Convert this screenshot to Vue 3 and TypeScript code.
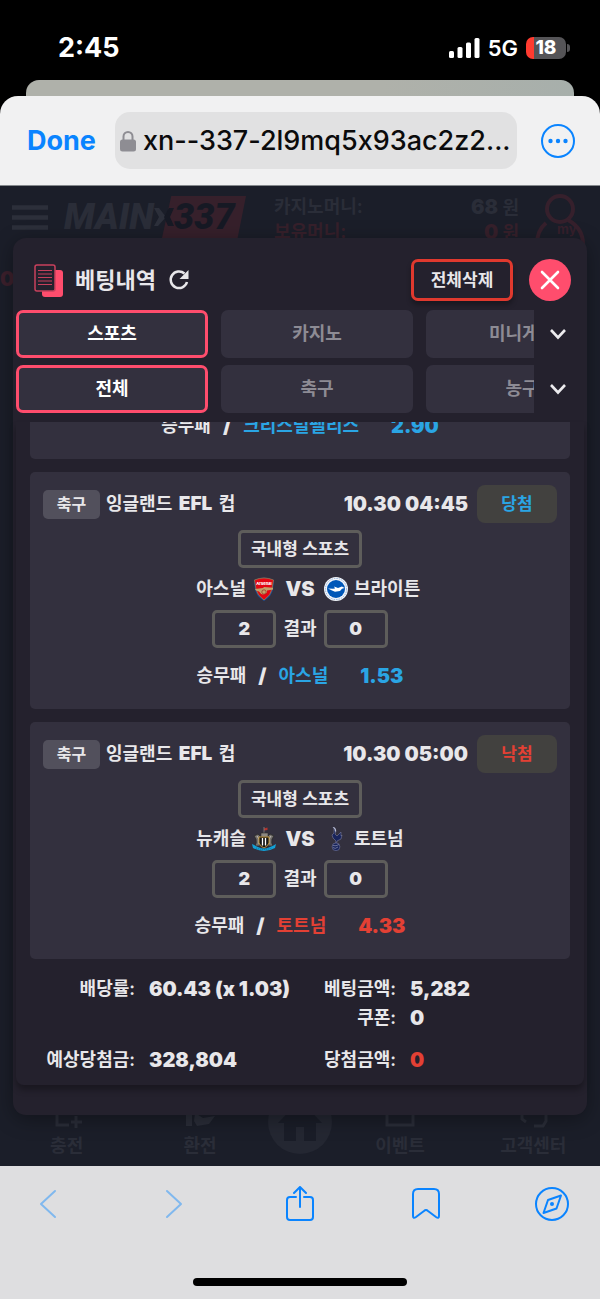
<script setup lang="ts">
import { ref } from 'vue'

type Crest = 'arsenal' | 'brighton' | 'newcastle' | 'tottenham'

interface Bet {
  time: string
  won: boolean
  home: { name: string; crest: Crest; score: number }
  away: { name: string; crest: Crest; score: number }
  pick: string
  odds: string
}

const bets: Bet[] = [
  {
    time: '10.30 04:45',
    won: true,
    home: { name: '아스널', crest: 'arsenal', score: 2 },
    away: { name: '브라이튼', crest: 'brighton', score: 0 },
    pick: '아스널',
    odds: '1.53',
  },
  {
    time: '10.30 05:00',
    won: false,
    home: { name: '뉴캐슬', crest: 'newcastle', score: 2 },
    away: { name: '토트넘', crest: 'tottenham', score: 0 },
    pick: '토트넘',
    odds: '4.33',
  },
]

const filters = [
  { name: 'category', tabs: ['스포츠', '카지노', '미니게임'] },
  { name: 'sport', tabs: ['전체', '축구', '농구'] },
]
const active = ref<number[]>([0, 0])
</script>

<template>
  <div class="screen">
    <header class="status">
      <span class="clock">2:45</span>
      <div class="status-right">
        <svg class="signal" viewBox="0 0 31 20" aria-hidden="true">
          <rect x="0" y="13" width="5" height="7" rx="1.5" />
          <rect x="8.500" y="9" width="5" height="11" rx="1.500" />
          <rect x="17" y="4.500" width="5" height="15.500" rx="1.500" />
          <rect x="25.500" y="0" width="5" height="20" rx="1.500" />
        </svg>
        <span class="network">5G</span>
        <span class="battery"><span>18</span></span>
      </div>
    </header>
    <div class="peek"></div>

    <div class="sheet">
      <div class="addressbar">
        <button type="button" class="done">Done</button>
        <div class="url">
          <svg class="lock" viewBox="0 0 16 22" aria-hidden="true">
            <path d="M3.500 10V6.500a4.500 4.500 0 0 1 9 0V10" fill="none" stroke="#8e8d93" stroke-width="2" />
            <rect x="0" y="9.500" width="16" height="12" rx="2.500" fill="#8e8d93" />
          </svg>
          <span class="host">xn--337-2l9mq5x93ac2z2...</span>
        </div>
        <button type="button" class="round" aria-label="더보기">
          <svg viewBox="0 0 36 36" aria-hidden="true">
            <circle cx="18" cy="18" r="16" fill="none" stroke="#0a84ff" stroke-width="2" />
            <circle cx="10.500" cy="18" r="2.200" fill="#0a84ff" />
            <circle cx="18" cy="18" r="2.200" fill="#0a84ff" />
            <circle cx="25.500" cy="18" r="2.200" fill="#0a84ff" />
          </svg>
        </button>
      </div>

      <main class="web">
        <div class="site">
          <div class="site-head">
            <svg class="menu" viewBox="0 0 36 26" aria-hidden="true">
              <path d="M0 2.500h36M0 12.500h36M0 22.500h36" stroke="#2c2f3a" stroke-width="4.500" />
            </svg>
            <div class="logo">
              <span class="logo-main">MAIN</span>
              <svg class="logo-x" viewBox="0 0 20 18" aria-hidden="true">
                <path d="M0 0h5l7 9-8 9H0l5-9z" fill="#2c2f3a" />
                <path d="M20 0h-5l-5 9 4 9h6l-4-9z" fill="#161924" />
              </svg>
              <span class="logo-num">337</span>
            </div>
            <dl class="wallet">
              <div><dt>카지노머니:</dt><dd><b>68</b> 원</dd></div>
              <div class="held"><dt>보유머니:</dt><dd><b>0</b> 원</dd></div>
            </dl>
            <svg class="me" viewBox="0 0 50 50" aria-hidden="true">
              <g fill="none" stroke="#36202c" stroke-width="4">
                <circle cx="25" cy="15" r="13" />
                <path d="M11 29C5 34 2 40 2 50M33 26c9 5 15 13 15 24" />
              </g>
              <text x="22" y="40">my</text>
            </svg>
          </div>
          <span class="ticker">0</span>
          <nav class="site-nav">
            <a href="#">
              <svg viewBox="0 0 34 34" aria-hidden="true"><path d="M17 4H7v21h12M26 16v12M21 22h11" /></svg>
              <span>충전</span>
            </a>
            <a href="#">
              <svg viewBox="0 0 34 34" aria-hidden="true"><path class="solid" d="M3 8h6v18H3zM12 13l8 5 12-2-6 8-12 2-3-5z" /></svg>
              <span>환전</span>
            </a>
            <a href="#" class="home" aria-label="홈">
              <svg viewBox="0 0 64 64" aria-hidden="true">
                <circle cx="32" cy="32" r="32" fill="#242732" />
                <path d="M32 10 10 33h6v18h12V37h8v14h12V33h6z" fill="#1a1d28" />
              </svg>
            </a>
            <a href="#">
              <svg viewBox="0 0 34 34" aria-hidden="true"><path d="M4 4h26v21H4z" /></svg>
              <span>이벤트</span>
            </a>
            <a href="#">
              <svg viewBox="0 0 34 34" aria-hidden="true"><path d="M6 12v7l4 3M30 12v9l-3 5h-9" /></svg>
              <span>고객센터</span>
            </a>
          </nav>
        </div>

        <section class="modal" role="dialog" aria-labelledby="modal-title">
          <div class="modal-head">
            <svg class="slips" viewBox="0 0 29 33" aria-hidden="true">
              <rect x="8" y="6" width="21" height="27" rx="3" fill="#ff4d6d" />
              <rect x="1" y="1" width="20" height="26" rx="2" fill="#24212d" stroke="#c8405c" stroke-width="1.500" />
              <path d="M4 6.500h14M4 10h14M4 13.500h14M4 17h14M4 20.500h14" stroke="#c8405c" stroke-width="1.200" />
            </svg>
            <h1 id="modal-title">베팅내역</h1>
            <button type="button" class="refresh" aria-label="새로고침">
              <svg viewBox="0 0 22 22" aria-hidden="true">
                <path d="M16.500 4.500A8.300 8.300 0 1 0 19 13" fill="none" stroke="#e8e7ea" stroke-width="2.500" />
                <path d="M20.500 1v9h-9z" fill="#e8e7ea" />
              </svg>
            </button>
            <button type="button" class="clear">전체삭제</button>
            <button type="button" class="close" aria-label="닫기">
              <svg viewBox="0 0 42 42" aria-hidden="true">
                <path d="m13 13 16 16M29 13 13 29" stroke="#fff" stroke-width="2.600" stroke-linecap="round" />
              </svg>
            </button>
          </div>

          <div class="filters">
            <div v-for="(row, r) in filters" :key="row.name" class="filter">
              <div class="tabs">
                <button
                  v-for="(tab, i) in row.tabs"
                  :key="tab"
                  type="button"
                  class="tab"
                  :class="{ active: active[r] === i }"
                  @click="active[r] = i"
                >{{ tab }}</button>
              </div>
              <button type="button" class="more" aria-label="펼치기">
                <svg viewBox="0 0 18 12" aria-hidden="true">
                  <path d="m2 2 7 7.500L16 2" fill="none" stroke="#ecebee" stroke-width="2.600" />
                </svg>
              </button>
            </div>
          </div>

          <div class="panel">
            <article class="card scrolled">
              <p class="pick won">
                <span>승무패</span><b>/</b><em>크리스털팰리스</em><strong>2.90</strong>
              </p>
            </article>

            <article v-for="bet in bets" :key="bet.time" class="card">
              <div class="card-head">
                <span class="sport">축구</span>
                <span class="league">잉글랜드 <b>EFL</b> 컵</span>
                <time>{{ bet.time }}</time>
                <span class="state" :class="bet.won ? 'won' : 'lost'">{{ bet.won ? '당첨' : '낙첨' }}</span>
              </div>
              <div class="kind">국내형 스포츠</div>
              <div class="teams">
                <div v-for="(team, i) in [bet.home, bet.away]" :key="team.name" class="team" :class="{ away: i === 1 }">
                  <span>{{ team.name }}</span>
                  <svg v-if="team.crest === 'arsenal'" viewBox="0 0 24 24" aria-hidden="true">
                    <path d="M2 3Q12-2 22 3l-1 9q-1 7-9 12-8-5-9-12z" fill="#1c4f9c" />
                    <path d="M2.500 3Q12-1 21.500 3l-1.500 9q-1 6-8 11-7-5-8-11z" fill="#e30613" stroke="#9c824a" stroke-width=".7" />
                    <text class="crest-name" x="12" y="7.500">Arsenal</text>
                    <path d="m3 12 8-1 1-1 9 .8v1.600l-6 1v2q-2 2-4 2t-4-3l-3-.8z" fill="#c3a26a" />
                    <circle cx="12" cy="15" r="2.200" fill="#c3a26a" stroke="#8b1c14" stroke-width=".6" />
                  </svg>
                  <svg v-else-if="team.crest === 'brighton'" viewBox="0 0 24 24" aria-hidden="true">
                    <circle cx="12" cy="12" r="12" fill="#f2f5fa" />
                    <circle cx="12" cy="12" r="10.600" fill="none" stroke="#7fa5d6" stroke-width=".8" stroke-dasharray="1.500 1" />
                    <circle cx="12" cy="12" r="9" fill="#0057b8" />
                    <path d="m4 11.500 5 .3 2-.3-1-2 4 1.500 4-1.500 2.500 1.500-2.500.8-2 2.200-5 .8-3-1.300z" fill="#fff" />
                  </svg>
                  <svg v-else-if="team.crest === 'newcastle'" viewBox="0 0 24 24" aria-hidden="true">
                    <path d="M12 1.500 15.500.5v2.500L12 3.500z" fill="#b5322c" />
                    <path d="M12 0v7" stroke="#8a8584" stroke-width=".8" />
                    <path d="M3 19Q5 16 4 12L2 9l4-2 3 3-1 9zM21 19q-2-3-1-7l2-3-4-2-3 3 1 9z" fill="#77736f" stroke="#2a2928" stroke-width=".8" />
                    <path d="M5 9q3 2 2 8M19 9q-3 2-2 8" fill="none" stroke="#c7c4bf" stroke-width=".9" />
                    <path d="M9 6h7v4H9z" fill="#8d8982" stroke="#312d29" stroke-width=".6" />
                    <path d="M7 10h10v6q-1 3-5 5-4-2-5-5z" fill="#151515" stroke="#c99b38" stroke-width=".9" />
                    <path d="M10.500 11v7.500M13.500 11v7.500" stroke="#fff" stroke-width="1.300" />
                    <path d="M0 17q4 2 6 3 6 3 12 0 3-1 6-3l-1 4q-11 6-22 0z" fill="#12a0d7" />
                    <path d="M4 21q8 3 16 0" fill="none" stroke="#0d6185" stroke-width=".7" stroke-dasharray="1 1" />
                  </svg>
                  <svg v-else viewBox="0 0 24 24" aria-hidden="true">
                    <path d="m9 0 2 1 1 3-1 3 2 2 4-4v4l1-1-1 4-4 2-.5 3h-1l.5-3-3-3-1-3 2-2V2z" fill="#18245c" stroke="#77799a" stroke-width=".6" />
                    <path d="m9.500.5 1.500 1 .5 3" fill="none" stroke="#dadce8" stroke-width="1" />
                    <circle cx="12" cy="19.800" r="3.900" fill="#18245c" stroke="#77799a" stroke-width=".6" />
                    <path d="M9 18.500q3 1 6-1M9 20.500q2 2 5-.5" fill="none" stroke="#8e91ae" stroke-width=".7" />
                  </svg>
                </div>
                <b class="vs">VS</b>
              </div>
              <div class="result">
                <span class="score">{{ bet.home.score }}</span>
                <span>결과</span>
                <span class="score">{{ bet.away.score }}</span>
              </div>
              <p class="pick" :class="bet.won ? 'won' : 'lost'">
                <span>승무패</span><b>/</b><em>{{ bet.pick }}</em><strong>{{ bet.odds }}</strong>
              </p>
            </article>

            <dl class="summary">
              <dt>배당률:</dt><dd>60.43 (x 1.03)</dd>
              <dt>베팅금액:</dt><dd>5,282</dd>
              <dt class="right">쿠폰:</dt><dd>0</dd>
              <dt class="total">예상당첨금:</dt><dd class="total">328,804</dd>
              <dt class="total">당첨금액:</dt><dd class="total lost">0</dd>
            </dl>
          </div>
        </section>
      </main>
    </div>

    <footer class="browser">
      <div class="tools">
        <button type="button" disabled aria-label="뒤로">
          <svg viewBox="0 0 36 36" aria-hidden="true"><path d="M25 5 11 18l14 13" /></svg>
        </button>
        <button type="button" disabled aria-label="앞으로">
          <svg viewBox="0 0 36 36" aria-hidden="true"><path d="m11 5 14 13-14 13" /></svg>
        </button>
        <button type="button" aria-label="공유">
          <svg viewBox="0 0 36 36" aria-hidden="true">
            <path d="M14 11H8q-3 0-3 3v17q0 3 3 3h20q3 0 3-3V14q0-3-3-3h-6M18 21V1M12 7l6-6 6 6" />
          </svg>
        </button>
        <button type="button" aria-label="북마크">
          <svg viewBox="0 0 36 36" aria-hidden="true">
            <path d="M5 8q0-5 5-5h16q5 0 5 5v22q0 3-3 1l-8-6q-2-2-4 0l-8 6q-3 2-3-1z" />
          </svg>
        </button>
        <button type="button" aria-label="Safari">
          <svg viewBox="0 0 36 36" aria-hidden="true">
            <circle cx="18" cy="18" r="16" />
            <path d="m27 9.500-4.500 13L9.500 27l4.500-13z" />
            <circle class="dot" cx="18" cy="18" r="2" />
          </svg>
        </button>
      </div>
      <div class="indicator"></div>
    </footer>
  </div>
</template>

<style>
body {
  margin: 0;
  background: #000;
}
</style>

<style scoped>
.screen {
  display: flex;
  flex-direction: column;
  min-height: 100vh;
  background: #000;
  color: #e8e7ea;
  font-family: Inter, "Noto Sans CJK KR", sans-serif;
  font-size: 18px;
  font-weight: 600;
  line-height: 24px;
}
.screen * {
  box-sizing: border-box;
}
button {
  padding: 0;
  border: 0;
  background: none;
  color: inherit;
  font: inherit;
  cursor: pointer;
}
svg {
  display: block;
  flex: none;
}
h1,
p,
dl,
dd {
  margin: 0;
}

.status {
  display: flex;
  align-items: center;
  justify-content: space-between;
  height: 80px;
  padding: 15px 34px 0 58px;
  color: #fff;
}
.clock {
  font-size: 27px;
  font-weight: 700;
}
.status-right {
  display: flex;
  align-items: center;
  gap: 8px;
}
.signal {
  width: 31px;
  height: 20px;
  fill: #fff;
}
.network {
  font-size: 22px;
  font-weight: 600;
}
.battery {
  position: relative;
  width: 40px;
  height: 22px;
  border-radius: 7px;
  background: linear-gradient(90deg, #ff3b30 0 8px, #555457 8px);
  font-size: 19px;
  font-weight: 800;
  line-height: 22px;
  text-align: center;
}
.battery::after {
  content: "";
  position: absolute;
  top: 7px;
  right: -4px;
  width: 3px;
  height: 8px;
  border-radius: 0 3px 3px 0;
  background: #555457;
}
.peek {
  height: 16px;
  margin: 0 26px;
  border-radius: 13px 13px 0 0;
  background: linear-gradient(90deg, #afb1aa 65%, #a7afab);
}

.sheet {
  display: flex;
  flex: 1;
  flex-direction: column;
}
.addressbar {
  display: flex;
  align-items: center;
  gap: 19px;
  height: 90px;
  padding: 0 24px 0 27px;
  border-bottom: 1px solid #84888c;
  border-radius: 18px 18px 0 0;
  background: #f1f1f2;
}
.done {
  color: #0a84ff;
  font-size: 27px;
  font-weight: 700;
}
.url {
  display: flex;
  flex: 1;
  align-items: center;
  gap: 7px;
  min-width: 0;
  height: 57px;
  padding: 0 5px;
  border-radius: 15px;
  background: #e1e1e2;
  color: #0b0b0c;
  font-size: 27px;
  font-weight: 500;
  line-height: 34px;
}
.lock {
  width: 16px;
  height: 22px;
}
.host {
  overflow: hidden;
  font-feature-settings: "calt" 0;
  white-space: nowrap;
}
.round {
  margin-left: 4px;
}
.round svg {
  width: 36px;
  height: 36px;
}

.web {
  position: relative;
  flex: 1;
  padding: 52px 13px 51px;
  overflow: hidden;
  background: #1b1e29;
}
.site {
  position: absolute;
  inset: 0;
  display: flex;
  flex-direction: column;
  color: #2a2d38;
}
.site-head {
  display: flex;
  align-items: flex-start;
  padding: 8px 15px 0 12px;
}
.menu {
  width: 36px;
  height: 26px;
  margin-top: 11px;
}
.logo {
  display: flex;
  align-items: center;
  width: 182px;
  height: 42px;
  margin: 2px 28px 0 16px;
  font-family: Roboto, "Liberation Sans", sans-serif;
  font-size: 36px;
  font-style: italic;
  font-weight: 900;
  line-height: 42px;
}
.logo-main {
  width: 90px;
}
.logo-x {
  z-index: 1;
  width: 20px;
  height: 18px;
}
.logo-num {
  flex: 1;
  height: 42px;
  margin-left: -12px;
  padding-left: 12px;
  background: #36202b;
  clip-path: polygon(11% 0, 100% 0, 90% 100%, 0 100%);
  color: #161924;
}
.wallet {
  flex: 1;
  padding-top: 1px;
  font-weight: 700;
}
.wallet > div {
  display: flex;
  justify-content: space-between;
}
.wallet b {
  font-size: 20px;
  font-weight: 900;
}
.wallet .held {
  color: #36202b;
}
.me {
  width: 50px;
  height: 50px;
  margin-left: 16px;
}
.me text {
  fill: #36202c;
  font-size: 13px;
  font-weight: 700;
}
.ticker {
  margin-top: 22px;
  color: #3c202c;
  font-size: 20px;
  font-weight: 900;
}
.site-nav {
  display: grid;
  grid-template-columns: 2fr 2fr 1fr 2fr 2fr;
  align-items: end;
  margin-top: auto;
  padding-bottom: 8px;
}
.site-nav a {
  display: flex;
  flex-direction: column;
  align-items: center;
  color: #2a2d38;
  text-decoration: none;
}
.site-nav svg {
  width: 34px;
  height: 34px;
  fill: none;
  stroke: #2a2d38;
  stroke-width: 3;
}
.site-nav .solid {
  fill: #2a2d38;
  stroke: none;
}
.site-nav .home svg {
  width: 64px;
  height: 64px;
  margin-bottom: 4px;
  stroke: none;
}

.modal {
  position: relative;
  padding-bottom: 30px;
  border-radius: 13px;
  background: #24212d;
  box-shadow: 0 4px 20px rgba(0, 0, 0, 0.35);
}
.modal-head {
  display: flex;
  align-items: center;
  padding: 21px 16px 9px 21px;
}
.slips {
  width: 29px;
  height: 33px;
}
.modal-head h1 {
  margin: 0 12px;
  font-size: 22px;
  font-weight: 600;
  line-height: 30px;
}
.refresh svg {
  width: 22px;
  height: 22px;
}
.clear {
  width: 102px;
  height: 42px;
  margin-left: auto;
  border: 3px solid #e0392e;
  border-radius: 7px;
  box-shadow: 0 4px 5px rgba(0, 0, 0, 0.3);
  font-size: 17px;
}
.close {
  margin-left: 16px;
  border-radius: 50%;
  background: #ff4d6d;
}
.close svg {
  width: 42px;
  height: 42px;
}

.filters {
  display: grid;
  gap: 7px;
}
.filter {
  display: flex;
  min-width: 0;
  padding: 0 5px 0 3px;
}
.tabs {
  display: flex;
  flex: 1;
  gap: 13px;
  min-width: 0;
  height: 48px;
  overflow: hidden;
}
.tab {
  flex: none;
  width: 192px;
  border-radius: 7px;
  background: #33303e;
  color: #8d8b94;
}
.tab.active {
  border: 3px solid #ff4d6d;
  color: #fff;
}
.more {
  display: grid;
  place-items: center;
  width: 48px;
}
.more svg {
  width: 18px;
  height: 12px;
}

.panel {
  margin: 9px 3px 0;
  padding: 0 14px 13px;
  overflow: hidden;
  border-radius: 0 0 8px 8px;
  box-shadow: 0 5px 6px rgba(0, 0, 0, 0.3);
}
.card {
  margin-bottom: 13px;
  padding: 13px 13px 21px;
  border-radius: 5px;
  background: #33303e;
}
.card.scrolled {
  margin-top: -37px;
}
.card-head {
  display: flex;
  align-items: center;
  height: 38px;
  margin-bottom: 7px;
}
.sport {
  width: 57px;
  margin-right: 6px;
  border-radius: 5px;
  background: #52505c;
  font-size: 16px;
  line-height: 29px;
  text-align: center;
}
.league b {
  margin: 0 2px;
  font-size: 19px;
  font-weight: 900;
}
.card-head time {
  margin-left: auto;
  font-size: 20px;
  font-weight: 900;
}
.state {
  width: 80px;
  margin-left: 9px;
  border-radius: 8px;
  background: #42413f;
  font-size: 17px;
  line-height: 38px;
  text-align: center;
}
.kind {
  width: 124px;
  margin: 0 auto;
  border: 3px solid #5e5d5b;
  border-radius: 5px;
  font-size: 17px;
  line-height: 32px;
  text-align: center;
}
.teams {
  display: grid;
  grid-template-columns: 1fr 48px 1fr;
  align-items: center;
  height: 42px;
}
.team {
  display: flex;
  grid-row: 1;
  grid-column: 1;
  align-items: center;
  justify-content: flex-end;
  gap: 6px;
}
.team.away {
  flex-direction: row-reverse;
  grid-column: 3;
}
.team svg {
  width: 24px;
  height: 24px;
}
.crest-name {
  fill: #fff;
  font-size: 4px;
  font-weight: 800;
  text-anchor: middle;
}
.vs {
  grid-row: 1;
  grid-column: 2;
  font-size: 20px;
  font-weight: 900;
  text-align: center;
}
.result {
  display: flex;
  align-items: center;
  justify-content: center;
  gap: 7px;
}
.score {
  width: 64px;
  border: 3px solid #5e5d5b;
  border-radius: 5px;
  font-weight: 900;
  line-height: 32px;
  text-align: center;
}
.pick {
  display: flex;
  justify-content: center;
  margin-top: 16px;
}
.pick b {
  margin: 0 12px;
  font-size: 20px;
  font-weight: 900;
}
.pick em {
  margin-right: 32px;
  font-style: normal;
}
.pick strong {
  font-size: 20px;
  font-weight: 900;
}
.pick.won em,
.pick.won strong,
.state.won {
  color: #2aa5e4;
}
.pick.lost em,
.pick.lost strong,
.state.lost,
.summary .lost {
  color: #e34034;
}
.summary {
  display: grid;
  grid-template-columns: 105px 1fr 75px 1fr;
  gap: 5px 14px;
  padding: 5px 2px 0 0;
  white-space: nowrap;
}
.summary dt {
  text-align: right;
}
.summary dd {
  font-size: 20px;
  font-weight: 900;
}
.summary .right {
  grid-column: 3;
}
.summary .total {
  margin-top: 13px;
}

.browser {
  display: flex;
  flex-direction: column;
  justify-content: space-between;
  height: 133px;
  padding-bottom: 13px;
  background: #dedee0;
}
.tools {
  display: flex;
  justify-content: space-between;
  padding: 20px 30px 0;
}
.tools svg {
  width: 36px;
  height: 36px;
  fill: none;
  stroke: #0a84ff;
  stroke-width: 2;
  stroke-linecap: round;
  stroke-linejoin: round;
}
.tools button:disabled svg {
  stroke: #80b8ee;
}
.tools .dot {
  fill: #0a84ff;
  stroke: none;
}
.indicator {
  width: 214px;
  height: 8px;
  margin: 0 auto;
  border-radius: 4px;
  background: #000;
}
</style>
